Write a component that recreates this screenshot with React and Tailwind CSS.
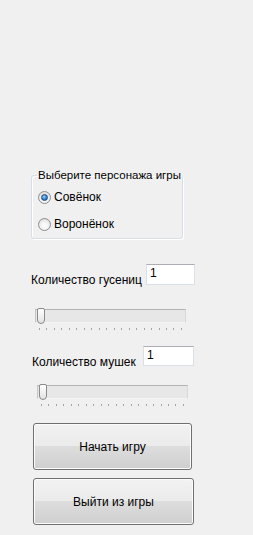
import { useState } from 'react';

const ticks = Array.from({ length: 20 }, (_, i) => i);

const Radio = ({ checked, label, onClick }) => (
  <div className="flex items-center h-[14px] cursor-default" onClick={onClick}>
    <div className="ml-[6px] w-[13px] h-[13px] rounded-full border border-[#8e8f8f] bg-[radial-gradient(circle_at_50%_60%,#ffffff_0%,#f4f4f4_40%,#cfcfcf_100%)] flex items-center justify-center">
      {checked && (
        <div className="w-[7px] h-[7px] rounded-full bg-[radial-gradient(circle_at_40%_35%,#a9d6f5_0%,#3d8fd6_45%,#1b4f8f_100%)] border border-[#1c4a80]" />
      )}
    </div>
    <span className="ml-[3px] leading-[14px]">{label}</span>
  </div>
);

const Slider = ({ className }) => (
  <div className={className}>
    <div className="relative w-[151px] h-[14px] bg-[#e7e7e7] border border-t-[#b3b3b3] border-l-[#c6c6c6] border-r-[#d8d8d8] border-b-[#f4f4f4]">
      <div className="absolute left-[1px] top-[-2px] w-[8px] h-[16px] rounded-t-[2px] rounded-b-[4px] border border-[#8a8a8a] bg-gradient-to-b from-[#ffffff] to-[#e2e2e2]" />
    </div>
    <div className="flex justify-between w-[143px] ml-[4px] mt-[5px] h-[2px]">
      {ticks.map((i) => (
        <div key={i} className="w-[1px] h-[2px] bg-[#a3a3a3]" />
      ))}
    </div>
  </div>
);

const WinButton = ({ label, className }) => (
  <button className={`h-[47px] rounded-[3px] border border-[#707070] shadow-[inset_0_0_0_1px_#fcfcfc] bg-[linear-gradient(to_bottom,#f2f2f2_0%,#ebebeb_48%,#dddddd_50%,#cfcfcf_100%)] text-[12px] text-black ${className}`}>
    {label}
  </button>
);

export default function App() {
  const [hero, setHero] = useState('owl');
  const [caterpillars, setCaterpillars] = useState('1');
  const [flies, setFlies] = useState('1');

  return (
    <div className="w-[253px] h-[535px] bg-[#f0f0f0] pt-[168px] text-[12px] text-black font-['Liberation_Sans',Arial,sans-serif] flex flex-col">
      <fieldset className="ml-[31px] w-[146px] border border-[#d5dfe5] rounded-[3px] shadow-[inset_1px_1px_0_#ffffff,1px_1px_0_#ffffff] pb-[7px]">
        <legend className="ml-[5px] px-[1px] leading-[14px] whitespace-nowrap text-[11.5px]">Выберите персонажа игры</legend>
        <div className="mt-[8px] flex flex-col gap-[13px]">
          <Radio checked={hero === 'owl'} label="Совёнок" onClick={() => setHero('owl')} />
          <Radio checked={hero === 'crow'} label="Воронёнок" onClick={() => setHero('crow')} />
        </div>
      </fieldset>

      <div className="flex items-start mt-[25px] ml-[31px]">
        <span className="w-[115px] mt-[9px] leading-[14px] whitespace-nowrap">Количество гусениц</span>
        <input
          value={caterpillars}
          onChange={(e) => setCaterpillars(e.target.value)}
          className="w-[49px] h-[21px] bg-white border border-[#dbdfe6] border-t-[#abadb3] pl-[3px] pb-[3px] outline-none text-[12px]"
        />
      </div>

      <Slider className="ml-[35px] mt-[22px]" />

      <div className="flex items-start mt-[16px] ml-[32px]">
        <span className="w-[111px] mt-[9px] leading-[14px] whitespace-nowrap">Количество мушек</span>
        <input
          value={flies}
          onChange={(e) => setFlies(e.target.value)}
          className="w-[51px] h-[20px] bg-white border border-[#dbdfe6] border-t-[#abadb3] pl-[3px] pb-[3px] outline-none text-[12px]"
        />
      </div>

      <Slider className="ml-[37px] mt-[16px]" />

      <WinButton label="Начать игру" className="ml-[33px] mt-[17px] w-[159px]" />
      <WinButton label="Выйти из игры" className="ml-[33px] mt-[8px] w-[161px]" />
    </div>
  );
}
